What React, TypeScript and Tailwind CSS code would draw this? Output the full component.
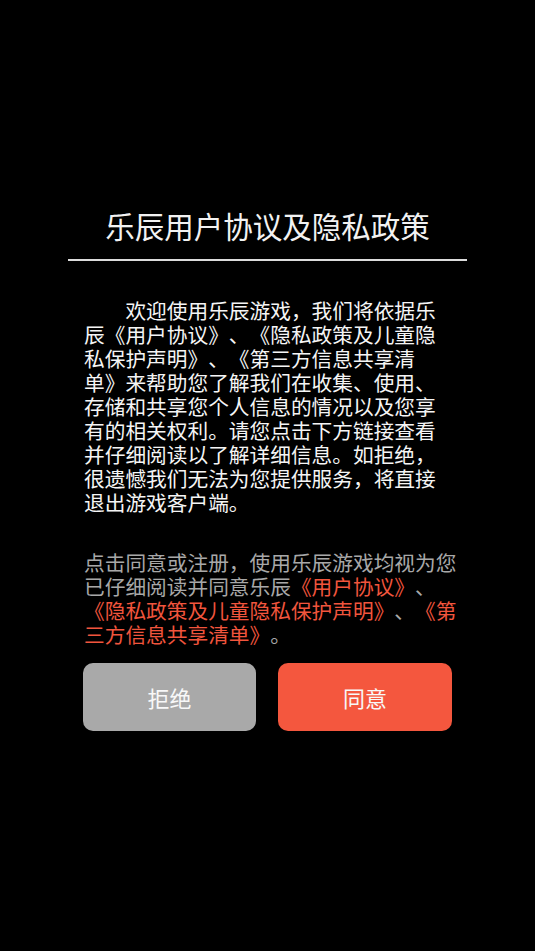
export default function App() {
  const font = { fontFamily: '"Noto Sans CJK SC", "Noto Sans", sans-serif' };
  return (
    <div className="min-h-[951px] w-full bg-black text-[#f2f2f2] [text-spacing-trim:space-all] [line-break:strict]" style={font}>
      <div className="flex flex-col items-center pt-[207px]">
        <h1 className="text-[29.5px] leading-[36px] font-normal text-[#f2f2f2]">乐辰用户协议及隐私政策</h1>
        <div className="mt-[16px] h-[2px] w-[399px] bg-[#dcdcdc]" />
      </div>

      <div className="ml-[84px] mt-[37px] w-[376px]">
        <p className="w-[356px] text-[20.7px] leading-[24px] text-[#f5f5f5]">
          {'\u3000\u3000'}欢迎使用乐辰游戏，我们将依据乐辰《用户协议》、《隐私政策及儿童隐私保护声明》、《第三方信息共享清单》来帮助您了解我们在收集、使用、存储和共享您个人信息的情况以及您享有的相关权利。请您点击下方链接查看并仔细阅读以了解详细信息。如拒绝，很遗憾我们无法为您提供服务，将直接退出游戏客户端。
        </p>

        <p className="mt-[36px] w-[376px] text-[20.7px] leading-[24px] text-[#a8a8a8]">
          点击同意或注册，使用乐辰游戏均视为您已仔细阅读并同意乐辰
          <span className="text-[#f1553d]">《用户协议》</span>、
          <span className="text-[#f1553d]">《隐私政策及儿童隐私保护声明》</span>、
          <span className="text-[#f1553d]">《第三方信息共享清单》</span>。
        </p>
      </div>

      <div className="ml-[83px] mt-[17px] flex gap-[22px]">
        <button className="flex h-[68px] w-[173px] items-center justify-center rounded-[10px] bg-[#a9a9a9] text-[22px] text-[#f8f8f8]">
          拒绝
        </button>
        <button className="flex h-[68px] w-[174px] items-center justify-center rounded-[10px] bg-[#f4573e] text-[22px] text-[#f8f8f8]">
          同意
        </button>
      </div>
    </div>
  );
}
